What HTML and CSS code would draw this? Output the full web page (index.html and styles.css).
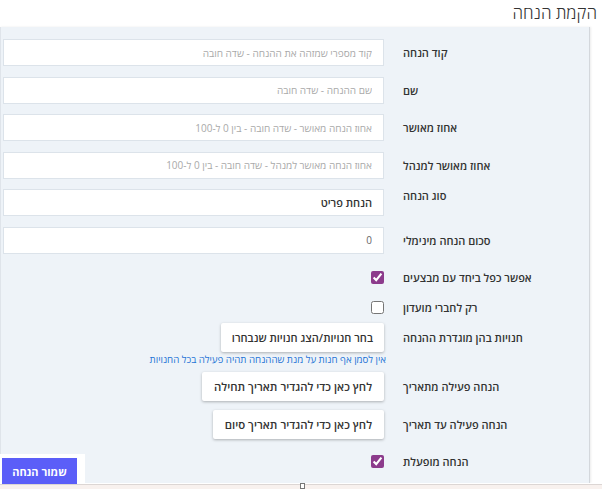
FILE: index.html
```html
<!DOCTYPE html>
<html lang="he" dir="rtl">
<head>
    <meta charset="UTF-8">
    <meta name="viewport" content="width=device-width, initial-scale=1.0">
    <title>הקמת הנחה</title>
    <link rel="stylesheet" href="styles.css">
</head>
<body>
    <h1 class="page-title">הקמת הנחה</h1>

    <div class="panel">
        <div class="group group-inputs">
            <div class="row row-input">
                <label class="row-label">קוד הנחה</label>
                <div class="row-field"><input class="text-input" type="text" placeholder="קוד מספרי שמזהה את ההנחה - שדה חובה"></div>
            </div>
            <div class="row row-input">
                <label class="row-label">שם</label>
                <div class="row-field"><input class="text-input" type="text" placeholder="שם ההנחה - שדה חובה"></div>
            </div>
            <div class="row row-input">
                <label class="row-label">אחוז מאושר</label>
                <div class="row-field"><input class="text-input" type="text" placeholder="אחוז הנחה מאושר - שדה חובה - בין 0 ל-100"></div>
            </div>
            <div class="row row-input">
                <label class="row-label">אחוז מאושר למנהל</label>
                <div class="row-field"><input class="text-input" type="text" placeholder="אחוז הנחה מאושר למנהל - שדה חובה - בין 0 ל-100"></div>
            </div>
            <div class="row row-input">
                <label class="row-label label-top">סוג הנחה</label>
                <div class="row-field"><div class="text-input select-value">הנחת פריט</div></div>
            </div>
            <div class="row row-input">
                <label class="row-label">סכום הנחה מינימלי</label>
                <div class="row-field"><input class="text-input" type="text" value="0"></div>
            </div>
        </div>

        <div class="group group-checks">
            <div class="row row-check">
                <label class="row-label">אפשר כפל ביחד עם מבצעים</label>
                <div class="row-field"><input class="check" type="checkbox" checked></div>
            </div>
            <div class="row row-check">
                <label class="row-label">רק לחברי מועדון</label>
                <div class="row-field"><input class="check" type="checkbox"></div>
            </div>
        </div>

        <div class="group group-stores">
            <div class="row row-button">
                <label class="row-label">חנויות בהן מוגדרת ההנחה</label>
                <div class="row-field"><button class="btn" type="button">בחר חנויות/הצג חנויות שנבחרו</button></div>
            </div>
            <div class="hint">אין לסמן אף חנות על מנת שההנחה תהיה פעילה בכל החנויות</div>
        </div>

        <div class="group group-dates">
            <div class="row row-button">
                <label class="row-label">הנחה פעילה מתאריך</label>
                <div class="row-field"><button class="btn btn-date" type="button">לחץ כאן כדי להגדיר תאריך תחילה</button></div>
            </div>
            <div class="row row-button">
                <label class="row-label">הנחה פעילה עד תאריך</label>
                <div class="row-field"><button class="btn btn-date" type="button">לחץ כאן כדי להגדיר תאריך סיום</button></div>
            </div>
        </div>

        <div class="row row-check">
            <label class="row-label">הנחה מופעלת</label>
            <div class="row-field"><input class="check" type="checkbox" checked></div>
        </div>
    </div>

    <div class="save-bar">
        <button class="save-btn" type="button">שמור הנחה</button>
    </div>

    <div class="bottom-strip"><span class="grip"></span></div>
</body>
</html>
```

FILE: styles.css
```css
body {
    margin: 0;
    background-color: #ffffff;
    color: #333333;
    font-family: 'Open Sans', 'Liberation Sans', 'DejaVu Sans', sans-serif;
    overflow: hidden;
}

.page-title {
    margin: 0;
    height: 27px;
    padding-right: 5px;
    font-size: 17px;
    font-weight: 300;
    line-height: 25px;
    color: #333333;
}

.panel {
    width: 590px;
    height: 456px;
    box-sizing: border-box;
    margin-right: 12px;
    padding: 12px 0 0 2px;
    background-color: #eef3f8;
    border-left: 1px solid #dfe4ea;
    border-right: 1px solid #d3d7dc;
    box-shadow: 1px 0 2px rgba(0, 0, 0, 0.08);
}

.group {
    display: flex;
    flex-direction: column;
}

.group-inputs {
    gap: 10.6px;
    margin-bottom: 14px;
}

.group-checks {
    gap: 10px;
    margin-bottom: 5px;
}

.group-stores {
    margin-bottom: 5px;
}

.group-dates {
    gap: 9px;
    margin-bottom: 13px;
}

.row {
    display: flex;
    align-items: center;
}

.row-input {
    height: 27px;
}

.row-check {
    height: 20px;
}

.row-button {
    height: 29px;
}

.row-label {
    width: 186px;
    margin-left: 19px;
    text-align: left;
    font-size: 11px;
    font-weight: 600;
    color: #333333;
}

.label-top {
    align-self: flex-start;
    margin-top: -1px;
}

.row-field {
    flex: 1;
    display: flex;
    align-items: center;
}

.text-input {
    width: 100%;
    height: 27px;
    box-sizing: border-box;
    padding: 0 11px;
    border: 1px solid #dce3ea;
    background-color: #ffffff;
    font-family: inherit;
    font-size: 10px;
    color: #666666;
    outline: none;
}

.text-input::placeholder {
    color: #a9a9a9;
}

.select-value {
    display: flex;
    align-items: center;
    font-size: 11px;
    font-weight: 600;
    color: #333333;
}

.check {
    width: 13px;
    height: 13px;
    margin: 0;
    accent-color: #8c3b8c;
}

.btn {
    height: 29px;
    padding: 0 11px;
    border: none;
    border-radius: 2px;
    background-color: #ffffff;
    box-shadow: 0 1px 3px rgba(0, 0, 0, 0.28);
    font-family: inherit;
    font-size: 11px;
    font-weight: 600;
    color: #333333;
    cursor: pointer;
}

.btn-date {
    padding: 0 12px;
    font-size: 11.4px;
}

.hint {
    height: 15px;
    line-height: 15px;
    margin-right: 203px;
    font-size: 9.7px;
    color: #1f74d6;
    white-space: nowrap;
}

.save-bar {
    position: fixed;
    left: 0;
    bottom: 4px;
    width: 85px;
    height: 31px;
    padding: 4px 0 0 2px;
    box-sizing: border-box;
    background-color: #ffffff;
    direction: ltr;
}

.save-btn {
    width: 75px;
    height: 27px;
    border: none;
    background-color: #5b5ef8;
    color: #ffffff;
    font-family: inherit;
    font-size: 11px;
    font-weight: 700;
    cursor: pointer;
}

.bottom-strip {
    position: fixed;
    left: 0;
    right: 0;
    bottom: 0;
    height: 4px;
    border-top: 1px solid #dcd6d4;
    background-color: #f8f1ee;
}

.grip {
    position: absolute;
    left: 300px;
    top: -2px;
    width: 3px;
    height: 4px;
    border: 1px solid #777777;
    background-color: #ffffff;
}
```
